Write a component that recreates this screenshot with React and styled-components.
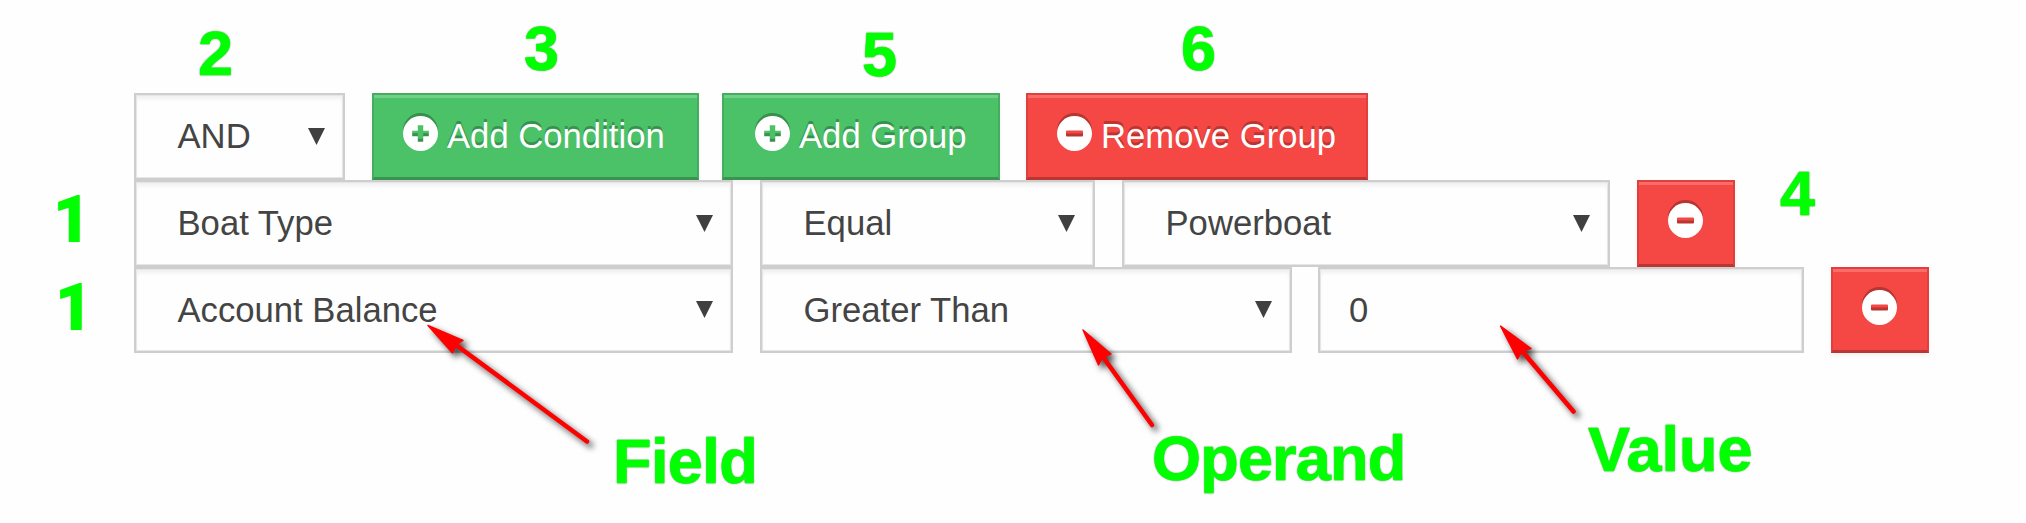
import React from "react";
import styled, { createGlobalStyle } from "styled-components";

const Global = createGlobalStyle`
  body { margin: 0; background: #fefefe; }
  * { box-sizing: border-box; }
`;

const Page = styled.main`
  position: relative;
  width: 2026px;
  height: 523px;
  padding: 93px 0 0 134px;
  overflow: hidden;
  font-family: "Liberation Sans", Arial, sans-serif;
  font-size: 34.67px;
  color: #444;
`;

const Row = styled.div`
  display: flex;
  height: ${(p) => p.$h ?? 87}px;
`;

const Box = styled.div`
  display: flex;
  width: ${(p) => p.$w}px;
  height: 100%;
  margin-right: ${(p) => p.$gap ?? 27}px;
  border: 2px solid #cecece;
  background: #fefefe;
  box-shadow: inset 0 0 0 1px #e6e6e6, inset 0 4px 4px rgba(0, 0, 0, 0.06);
  line-height: 83px;
  white-space: nowrap;
`;

const Select = styled(Box)`
  justify-content: space-between;
  align-items: center;
  padding: 0 18px 0 41.5px;
`;

const TextField = styled(Box)`
  padding-left: 29px;
  line-height: 82px;
`;

const palette = {
  green: ["#4bc168", "#46ad60", "#3b9350", "#70cf88"],
  red: ["#f54743", "#df403d", "#bb3633", "#f96c69"],
};

const Button = styled.button`
  display: flex;
  align-items: center;
  width: ${(p) => p.$w}px;
  height: 100%;
  margin: 0 ${(p) => p.$gap ?? 0}px 0 0;
  padding: 0 0 0 ${(p) => p.$pad ?? 29}px;
  border: 2px solid ${(p) => palette[p.$tone][1]};
  border-bottom: 3px solid ${(p) => palette[p.$tone][2]};
  background: ${(p) => palette[p.$tone][0]};
  box-shadow: inset 0 3px 0 ${(p) => palette[p.$tone][3]}, 0 3px 4px rgba(0, 0, 0, 0.05);
  color: #fff;
  font: inherit;
  line-height: 81px;
  text-shadow: 0 -2.67px 0 rgba(0, 0, 0, 0.25);
  white-space: nowrap;
`;

const IconSvg = styled.svg`
  flex: none;
  width: 35px;
  height: 35px;
  margin: 0 9px 5px 0;
  overflow: visible;
  filter: drop-shadow(0 -2.5px 0 rgba(0, 0, 0, 0.25));
`;

const Triangle = styled.svg`
  flex: none;
  width: 17px;
  height: 17px;
  margin-bottom: 1px;
  fill: #404040;
`;

const Label = styled.span`
  position: absolute;
  left: ${(p) => p.$x}px;
  top: ${(p) => p.$base - 54}px;
  color: #00ff00;
  font-family: ${(p) => (p.$plain ? 'Roboto, "Liberation Sans", sans-serif' : "inherit")};
  font-size: 63px;
  font-weight: 700;
  line-height: 64px;
  letter-spacing: ${(p) => p.$track ?? 0}px;
  -webkit-text-stroke: ${(p) => (p.$plain ? 2 : 0.6)}px #00ff00;
  text-shadow: 0 0 2px rgba(70, 50, 70, 0.75);
  white-space: nowrap;
`;

const Arrows = styled.svg`
  position: absolute;
  inset: 0;
  width: 2026px;
  height: 523px;
  pointer-events: none;
  filter: drop-shadow(4px 4px 3px rgba(0, 0, 0, 0.7));
`;

const Icon = ({ plus }) => (
  <IconSvg viewBox="0 0 35 35">
    <path
      fill="#fff"
      fillRule="evenodd"
      d={
        "M17.5 0a17.5 17.5 0 1 0 0 35a17.5 17.5 0 1 0 0-35z" +
        (plus
          ? "M14.8 9.2h5.4v5.6h5.6v5.4h-5.6v5.6h-5.4v-5.6h-5.6v-5.4h5.6z"
          : "M10 14.6h15q1 0 1 1v4q0 1-1 1h-15q-1 0-1-1v-4q0-1 1-1z")
      }
    />
  </IconSvg>
);

const Dropdown = ({ w, children, gap }) => (
  <Select $w={w} $gap={gap}>
    {children}
    <Triangle viewBox="0 0 17 17">
      <path d="M0 0h17l-8.5 17z" />
    </Triangle>
  </Select>
);

const Arrow = ({ head, line }) => (
  <g fill="#f00" stroke="#f00" strokeLinejoin="round" strokeLinecap="round">
    <path d={line} strokeWidth="4.6" />
    <path d={head} strokeWidth="1.4" />
  </g>
);

const labels = [
  { text: "2", x: 198, base: 75 },
  { text: "3", x: 524, base: 70 },
  { text: "5", x: 862, base: 76 },
  { text: "6", x: 1181, base: 70 },
  { text: "4", x: 1780, base: 215 },
  { text: "1", x: 54, base: 242, plain: true },
  { text: "1", x: 56, base: 330, plain: true },
  { text: "Field", x: 613, base: 483, track: -0.6 },
  { text: "Operand", x: 1152, base: 480, track: -0.8 },
  { text: "Value", x: 1588, base: 471 },
];

export default function App() {
  return (
    <Page>
      <Global />
      <Row>
        <Dropdown w={211}>AND</Dropdown>
        <Button $tone="green" $w={327} $gap={23}><Icon plus />Add Condition</Button>
        <Button $tone="green" $w={278} $gap={26} $pad={31}><Icon plus />Add Group</Button>
        <Button $tone="red" $w={342}><Icon />Remove Group</Button>
      </Row>
      <Row>
        <Dropdown w={599}>Boat Type</Dropdown>
        <Dropdown w={335}>Equal</Dropdown>
        <Dropdown w={488}>Powerboat</Dropdown>
        <Button $tone="red" $w={98}><Icon /></Button>
      </Row>
      <Row $h={86}>
        <Dropdown w={599}>Account Balance</Dropdown>
        <Dropdown w={532} gap={26}>Greater Than</Dropdown>
        <TextField $w={486}>0</TextField>
        <Button $tone="red" $w={98}><Icon /></Button>
      </Row>
      <Arrows>
        <Arrow line="M456 345L587 441.5" head="M428 325.5L463 340.5L456 345L452.5 353z" />
        <Arrow line="M1103 357L1152 425" head="M1083 330L1111 354L1103 357L1098.5 365z" />
        <Arrow line="M1522 351L1573.5 411.5" head="M1500.5 326L1531 348.5L1522 351L1517.5 359z" />
      </Arrows>
      {labels.map(({ text, x, base, track, plain }, i) => (
        <Label key={i} $x={x} $base={base} $track={track} $plain={plain}>{text}</Label>
      ))}
    </Page>
  );
}
